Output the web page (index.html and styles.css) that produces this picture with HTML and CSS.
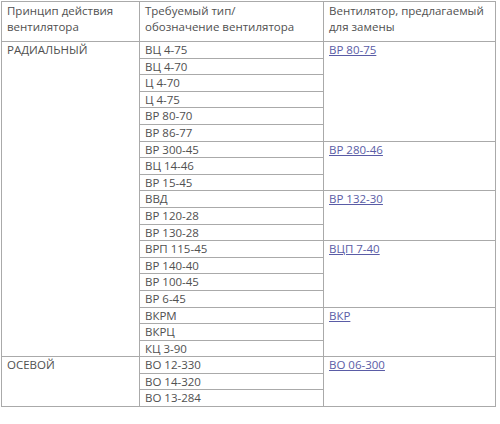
FILE: index.html
```html
<!DOCTYPE html>
<html lang="ru">
<head>
<meta charset="utf-8">
<link rel="stylesheet" href="styles.css">
</head>
<body>
<table class="fans">
  <colgroup>
    <col class="c1"><col class="c2"><col class="c3">
  </colgroup>
  <tr class="head">
    <td>Принцип действия вентилятора</td>
    <td>Требуемый тип/<br>обозначение вентилятора</td>
    <td>Вентилятор, предлагаемый для замены</td>
  </tr>
  <tr><td rowspan="19">РАДИАЛЬНЫЙ</td><td>ВЦ 4-75</td><td rowspan="6"><a href="#">ВР 80-75</a></td></tr>
  <tr><td>ВЦ 4-70</td></tr>
  <tr><td>Ц 4-70</td></tr>
  <tr><td>Ц 4-75</td></tr>
  <tr><td>ВР 80-70</td></tr>
  <tr><td>ВР 86-77</td></tr>
  <tr><td>ВР 300-45</td><td rowspan="3"><a href="#">ВР 280-46</a></td></tr>
  <tr><td>ВЦ 14-46</td></tr>
  <tr><td>ВР 15-45</td></tr>
  <tr><td>ВВД</td><td rowspan="3"><a href="#">ВР 132-30</a></td></tr>
  <tr><td>ВР 120-28</td></tr>
  <tr><td>ВР 130-28</td></tr>
  <tr><td>ВРП 115-45</td><td rowspan="4"><a href="#">ВЦП 7-40</a></td></tr>
  <tr><td>ВР 140-40</td></tr>
  <tr><td>ВР 100-45</td></tr>
  <tr><td>ВР 6-45</td></tr>
  <tr><td>ВКРМ</td><td rowspan="3"><a href="#">ВКР</a></td></tr>
  <tr><td>ВКРЦ</td></tr>
  <tr><td>КЦ 3-90</td></tr>
  <tr><td rowspan="3">ОСЕВОЙ</td><td>ВО 12-330</td><td rowspan="3"><a href="#">ВО 06-300</a></td></tr>
  <tr><td>ВО 14-320</td></tr>
  <tr><td>ВО 13-284</td></tr>
</table>
</body>
</html>
```

FILE: styles.css
```css
html, body {
  margin: 0;
  padding: 0;
  background: #fff;
}
body {
  padding: 1px 0 0 1px;
  font-family: "Open Sans", sans-serif;
  font-size: 11.5px;
  color: #505050;
}
.fans {
  border-collapse: collapse;
  table-layout: fixed;
  width: 494px;
}
.c1 { width: 138px; }
.c2 { width: 184px; }
.c3 { width: 172px; }
.fans td {
  border: 1px solid #aaaaaa;
  padding: 0 5px;
  line-height: 15.6px;
  vertical-align: top;
  text-align: left;
}
.head td {
  height: 38px;
  padding-top: 1px;
}
.fans a {
  color: #5a5ca6;
  text-decoration: underline;
}
```
